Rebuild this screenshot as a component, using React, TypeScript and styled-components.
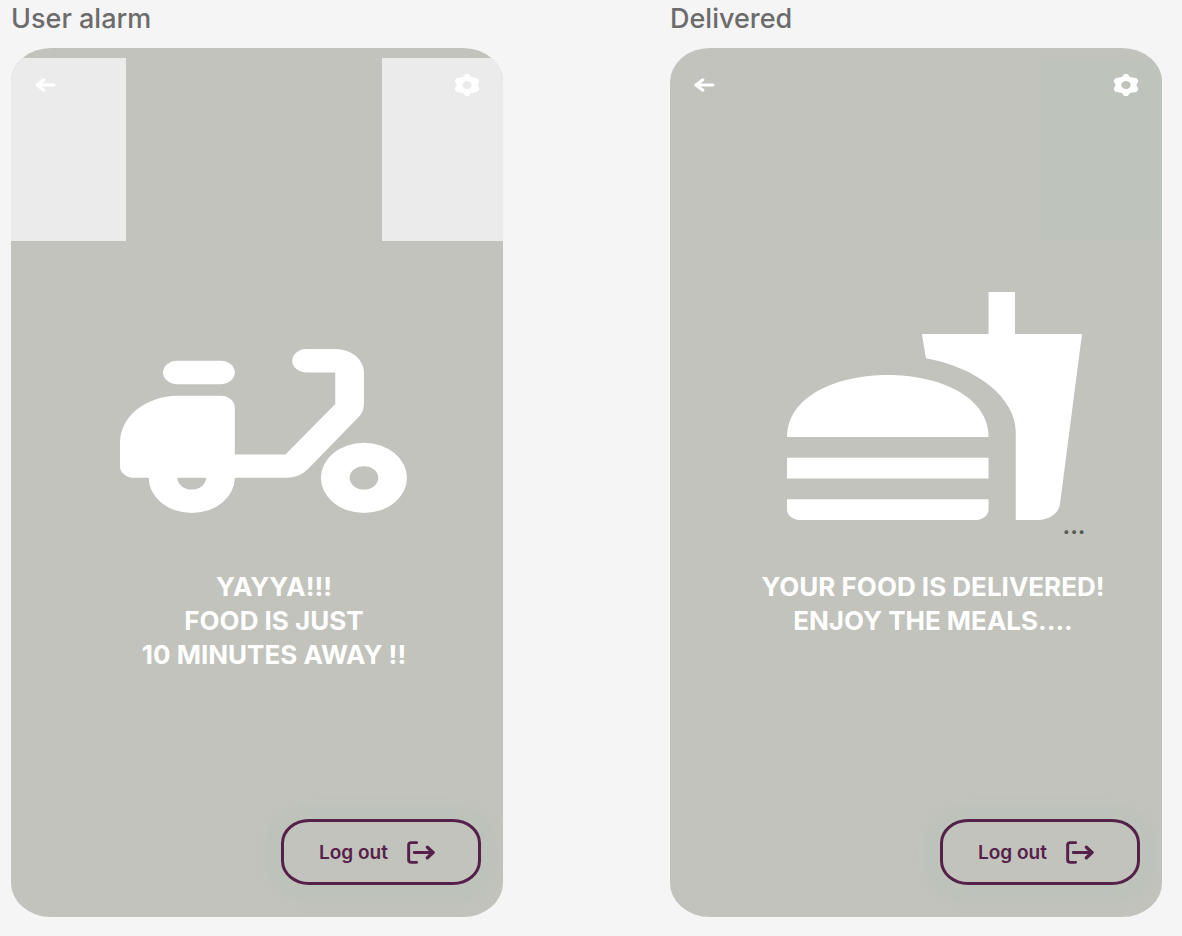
import React from "react";
import styled, { createGlobalStyle } from "styled-components";

const GlobalStyle = createGlobalStyle`
  *, *::before, *::after { box-sizing: border-box; }
  body {
    margin: 0;
    background: #f5f5f5;
    font-family: Inter, "Liberation Sans", sans-serif;
  }
`;

const Board = styled.main`
  display: grid;
  grid-template-columns: 1fr 1fr;
  column-gap: 167px;
  min-height: 100vh;
  padding: 0 20px 19px 11px;
`;

const Frame = styled.section`
  display: flex;
  flex-direction: column;
`;

const FrameTitle = styled.h2`
  margin: 0;
  height: 48px;
  padding-top: 3px;
  color: #6c6c6c;
  font-size: 27px;
  font-weight: 500;
  line-height: 32px;
`;

const Screen = styled.div`
  flex: 1;
  display: flex;
  flex-direction: column;
  padding-top: 10px;
  overflow: hidden;
  background: #c2c3bc;
  border-radius: 40px / 34px;
`;

const TopBar = styled.header`
  display: flex;
  justify-content: space-between;
  height: 183px;
`;

const Corner = styled.div<{ $fill: string; $end?: boolean }>`
  display: flex;
  align-items: flex-start;
  justify-content: ${(p) => (p.$end ? "flex-end" : "flex-start")};
  width: ${(p) => (p.$end ? 121 : 115)}px;
  padding: 11px 20px 0 18px;
  background: ${(p) => p.$fill};
`;

const IconButton = styled.button`
  display: flex;
  align-items: center;
  justify-content: center;
  width: 32px;
  height: 32px;
  padding: 0;
  border: 0;
  background: transparent;
  color: #fff;
  cursor: pointer;
`;

const Stage = styled.div<{ $shift: number; $base: number }>`
  display: flex;
  align-items: flex-end;
  justify-content: center;
  height: 329px;
  padding-left: ${(p) => p.$shift}px;
  padding-bottom: ${(p) => p.$base}px;
`;

const Figure = styled.figure`
  margin: 0;

  svg {
    display: block;
  }
`;

const Dots = styled.figcaption`
  height: 20px;
  margin-right: -4px;
  color: #555856;
  font-size: 24px;
  font-weight: 600;
  line-height: 12px;
  text-align: right;
`;

const Message = styled.p`
  margin: 0;
  padding-left: 34px;
  color: #fff;
  font-size: 26px;
  font-weight: 700;
  line-height: 34px;
  text-align: center;
`;

const Footer = styled.footer`
  display: flex;
  justify-content: flex-end;
  margin-top: auto;
  padding: 32px 22px;
`;

const LogoutButton = styled.button`
  display: flex;
  align-items: center;
  gap: 19px;
  width: 200px;
  height: 66px;
  padding: 0 0 0 35px;
  border: 3px solid #552049;
  border-radius: 28px / 24px;
  background: transparent;
  box-shadow: 0 2px 10px 16px #bdc2bb;
  color: #552049;
  font: 600 19px Inter, "Liberation Sans", sans-serif;
  white-space: nowrap;
  cursor: pointer;
`;

const BackIcon = () => (
  <svg width="21" height="16" viewBox="104 232 64 48" fill="none" stroke="currentColor" strokeWidth="9" strokeLinecap="round" strokeLinejoin="round" aria-hidden="true">
    <path d="M131 240 110 256 131 272M110 256H162" />
  </svg>
);

const GearIcon = () => (
  <svg width="26" height="24" viewBox="-13 -12 26 24" fill="currentColor" stroke="currentColor" strokeWidth="3" strokeLinejoin="round" aria-hidden="true">
    <path
      fillRule="evenodd"
      d="M-1-9.6H1L3.6-6.4 9.6-5.6 10.8-4 8.6 0 10.8 4 9.6 5.6 3.6 6.4 1 9.6H-1L-3.6 6.4-9.6 5.6-10.8 4-8.6 0-10.8-4-9.6-5.6-3.6-6.4ZM-6.2 0A6.2 5.6 0 1 0 6.2 0 6.2 5.6 0 1 0-6.2 0Z"
    />
  </svg>
);

const LogoutIcon = () => (
  <svg width="28" height="23" viewBox="440 120 85 70" fill="none" stroke="currentColor" strokeWidth="9" strokeLinecap="round" strokeLinejoin="round" aria-hidden="true">
    <path d="M469 125H453Q445 125 445 132V178Q445 185 453 185H469M462 155H519" />
    <path d="M502 139 519 155 502 171" strokeWidth="10" />
  </svg>
);

const Scooter = () => (
  <svg width="287" height="164" viewBox="0 0 20 14" preserveAspectRatio="none" fill="#fff" role="img" aria-label="Scooter">
    <path d="M4 1H7A1 1 0 0 1 7 3H4A1 1 0 0 1 4 1Z" />
    <path
      fillRule="evenodd"
      d="M4 4H7A1 1 0 0 1 8 5V9H11.53L15 4.7V2H13A1 1 0 0 1 13 0H15A2 2 0 0 1 17 2V4.65Q17 5.4 16.56 5.9L13.1 10.25Q12.5 11 11.55 11H8A3 3 0 0 1 2 11H1A1 1 0 0 1 0 10V8A4 4 0 0 1 4 4ZM4 11A1 1 0 0 0 6 11Z"
    />
    <path fillRule="evenodd" d="M14 11A3 3 0 1 1 20 11 3 3 0 1 1 14 11ZM16 11A1 1 0 1 0 18 11 1 1 0 1 0 16 11Z" />
  </svg>
);

const Meal = () => (
  <svg width="295" height="228" viewBox="1 1 22 22" preserveAspectRatio="none" fill="#fff" role="img" aria-label="Burger and drink">
    <path d="M18.06 23H19.72C20.56 23 21.25 22.35 21.35 21.53L23 5.05H18V1H16.03V5.05H11.06L11.36 7.4C15.1 8.25 18.06 11.2 18.06 14.5Z" />
    <path d="M1 22V21H16.03V22C16.03 22.55 15.58 23 15.02 23H2.01C1.45 23 1 22.55 1 22Z" />
    <path d="M16.03 15C16.03 7 1 7 1 15Z" />
    <path d="M1 17H16.03V19H1Z" />
  </svg>
);

type PhoneProps = {
  title: string;
  leftFill: string;
  rightFill: string;
  shift: number;
  base: number;
  art: React.ReactNode;
  lines: string[];
};

const Phone = ({ title, leftFill, rightFill, shift, base, art, lines }: PhoneProps) => (
  <Frame>
    <FrameTitle>{title}</FrameTitle>
    <Screen>
      <TopBar>
        <Corner $fill={leftFill}>
          <IconButton type="button" aria-label="Back">
            <BackIcon />
          </IconButton>
        </Corner>
        <Corner $fill={rightFill} $end>
          <IconButton type="button" aria-label="Settings">
            <GearIcon />
          </IconButton>
        </Corner>
      </TopBar>
      <Stage $shift={shift} $base={base}>
        <Figure>{art}</Figure>
      </Stage>
      <Message>
        {lines.map((line, i) => (
          <React.Fragment key={line}>
            {i > 0 && <br />}
            {line}
          </React.Fragment>
        ))}
      </Message>
      <Footer>
        <LogoutButton type="button">
          Log out
          <LogoutIcon />
        </LogoutButton>
      </Footer>
    </Screen>
  </Frame>
);

export default function App() {
  return (
    <>
      <GlobalStyle />
      <Board>
        <Phone
          title="User alarm"
          leftFill="#ebebeb"
          rightFill="#ebebeb"
          shift={12}
          base={57}
          art={<Scooter />}
          lines={["YAYYA!!!", "FOOD IS JUST", "10 MINUTES AWAY !!"]}
        />
        <Phone
          title="Delivered"
          leftFill="transparent"
          rightFill="#bec3bc"
          shift={36}
          base={30}
          art={
            <>
              <Meal />
              <Dots>...</Dots>
            </>
          }
          lines={["YOUR FOOD IS DELIVERED!", "ENJOY THE MEALS...."]}
        />
      </Board>
    </>
  );
}
